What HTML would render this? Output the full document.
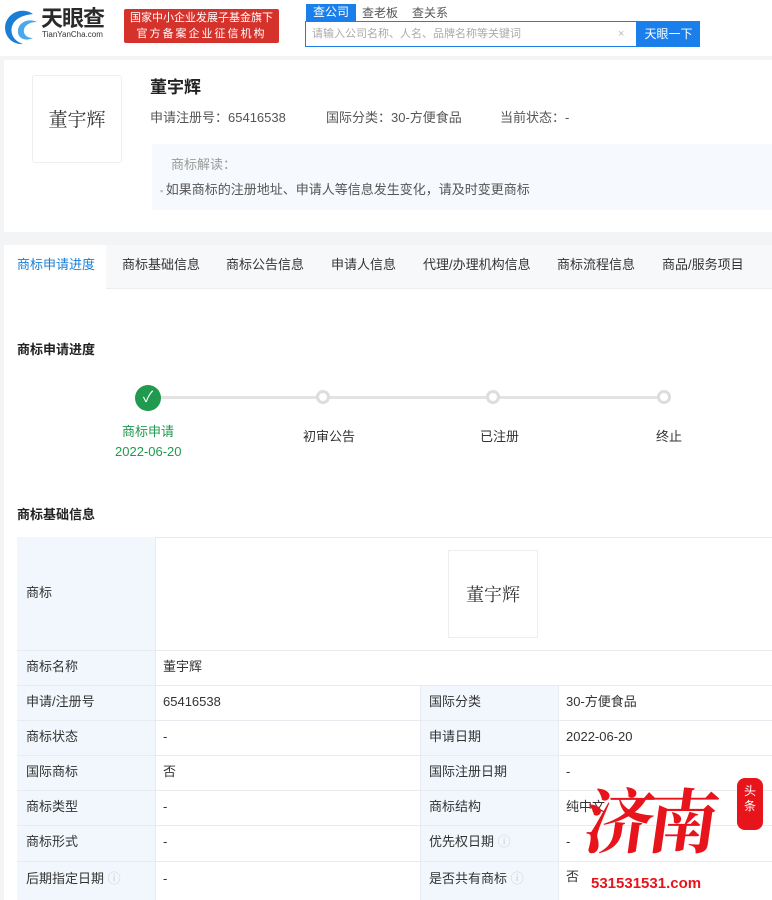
<!DOCTYPE html><html><head><meta charset="utf-8"><style>
*{margin:0;padding:0;box-sizing:border-box}
body{width:772px;height:900px;overflow:hidden;background:#f3f4f6;font-family:"Liberation Sans","Noto Sans CJK SC",sans-serif;color:#333;position:relative}
.a{position:absolute;white-space:nowrap;line-height:18px}
.f13{font-size:13px;line-height:18px}
</style></head><body>
<div class="a" style="left:0;top:0;width:772px;height:56px;background:#fff"></div>
<svg class="a" style="left:3px;top:8px" width="36" height="38" viewBox="0 0 36 38"><path d="M30 6C22 0 8 2 3 14 -1 26 8 37 20 36 10 33 6 24 10 16 14 9 22 7 30 6Z" fill="#1a7fd4"/><path d="M34 14C26 10 16 14 15 22 14 30 22 34 30 30 22 30 19 24 22 19 25 15 30 14 34 14Z" fill="#4aa8ec"/></svg>
<div class="a" style="left:41px;top:6px;font-size:22px;line-height:26px;font-weight:bold;color:#2a2a2a;letter-spacing:-1px">天眼查</div>
<div class="a" style="left:42px;top:30px;font-size:8px;line-height:10px;color:#333">TianYanCha.com</div>
<div class="a" style="left:124px;top:9px;width:155px;height:34px;background:#d6322c;border-radius:2px;color:#fff;font-size:11px;line-height:16px;padding:1px 4px;text-align:center">国家中小企业发展子基金旗下<br><span style="letter-spacing:2px">官方备案企业征信机构</span></div>
<div class="a" style="left:306px;top:4px;width:50px;height:17px;background:#1a7fea;color:#fff;font-size:12px;text-align:center;line-height:17px">查公司</div>
<div class="a" style="left:362px;top:4px;font-size:12px;color:#555">查老板</div>
<div class="a" style="left:412px;top:4px;font-size:12px;color:#555">查关系</div>
<div class="a" style="left:305px;top:21px;width:332px;height:26px;border:1px solid #1a7fea;background:#fff"></div>
<div class="a" style="left:312px;top:25px;font-size:11px;color:#aaa">请输入公司名称、人名、品牌名称等关键词</div>
<div class="a" style="left:618px;top:25px;font-size:11px;color:#bbb">×</div>
<div class="a" style="left:637px;top:21px;width:63px;height:26px;background:#1a7fea;color:#fff;font-size:12px;text-align:center;line-height:26px">天眼一下</div>

<div class="a" style="left:4px;top:60px;width:768px;height:172px;background:#fff"></div>
<div class="a" style="left:32px;top:75px;width:90px;height:88px;border:1px solid #eee;border-radius:3px;font-family:'Noto Serif CJK SC',serif;font-size:19px;text-align:center;line-height:86px">董宇辉</div>
<div class="a" style="left:150px;top:78px;font-size:17px;line-height:20px;font-weight:bold;color:#222">董宇辉</div>
<div class="a f13" style="left:150px;top:109px;color:#555">申请注册号：65416538</div>
<div class="a f13" style="left:326px;top:109px;color:#555">国际分类：30-方便食品</div>
<div class="a f13" style="left:500px;top:109px;color:#555">当前状态：-</div>
<div class="a" style="left:152px;top:144px;width:620px;height:66px;background:#f6f9fd"></div>
<div class="a f13" style="left:171px;top:156px;color:#999">商标解读：</div>
<div class="a f13" style="left:160px;top:181px;color:#555"><span style="color:#bbb;font-size:9px">▪ </span>如果商标的注册地址、申请人等信息发生变化，请及时变更商标</div>

<div class="a" style="left:4px;top:245px;width:768px;height:655px;background:#fff"></div>
<div class="a" style="left:4px;top:245px;width:768px;height:44px;background:#f7f8fa;border-bottom:1px solid #eee"></div>
<div class="a" style="left:4px;top:245px;width:102px;height:45px;background:#fff"></div>
<div class="a f13" style="left:17px;top:256px;color:#1a7fd4">商标申请进度</div>
<div class="a f13" style="left:122px;top:256px">商标基础信息</div>
<div class="a f13" style="left:226px;top:256px">商标公告信息</div>
<div class="a f13" style="left:331px;top:256px">申请人信息</div>
<div class="a f13" style="left:423px;top:256px">代理/办理机构信息</div>
<div class="a f13" style="left:557px;top:256px">商标流程信息</div>
<div class="a f13" style="left:662px;top:256px">商品/服务项目</div>

<div class="a f13" style="left:17px;top:341px;font-weight:bold;color:#222">商标申请进度</div>
<div class="a" style="left:148px;top:396px;width:516px;height:3px;background:#e3e3e3"></div>
<div class="a" style="left:135px;top:385px;width:26px;height:26px;border-radius:50%;background:#1f9a4f;color:#fff;font-size:15px;text-align:center;line-height:26px">✓</div>
<div class="a" style="left:316px;top:390px;width:14px;height:14px;border-radius:50%;background:#fff;border:3px solid #ddd"></div>
<div class="a" style="left:486px;top:390px;width:14px;height:14px;border-radius:50%;background:#fff;border:3px solid #ddd"></div>
<div class="a" style="left:657px;top:390px;width:14px;height:14px;border-radius:50%;background:#fff;border:3px solid #ddd"></div>
<div class="a f13" style="left:122px;top:423px;color:#1f9a4f">商标申请</div>
<div class="a f13" style="left:115px;top:443px;color:#1f9a4f">2022-06-20</div>
<div class="a f13" style="left:303px;top:428px">初审公告</div>
<div class="a f13" style="left:480px;top:428px">已注册</div>
<div class="a f13" style="left:656px;top:428px">终止</div>

<div class="a f13" style="left:17px;top:506px;font-weight:bold;color:#222">商标基础信息</div>
<div class="a" style="left:17px;top:537px;width:755px;height:363px;border-top:1px solid #e8ecf0;border-left:1px solid #e8ecf0"></div>
<div class="a" style="left:17px;top:537px;width:138px;height:363px;background:#f1f7fc"></div>
<div class="a" style="left:420px;top:685px;width:138px;height:215px;background:#f1f7fc"></div>
<div class="a" style="left:155px;top:537px;width:1px;height:363px;background:#e8ecf0"></div>
<div class="a" style="left:420px;top:685px;width:1px;height:215px;background:#e8ecf0"></div>
<div class="a" style="left:558px;top:685px;width:1px;height:215px;background:#e8ecf0"></div>
<div class="a" style="left:17px;top:650px;width:755px;height:1px;background:#e8ecf0"></div>
<div class="a" style="left:17px;top:685px;width:755px;height:1px;background:#e8ecf0"></div>
<div class="a" style="left:17px;top:720px;width:755px;height:1px;background:#e8ecf0"></div>
<div class="a" style="left:17px;top:755px;width:755px;height:1px;background:#e8ecf0"></div>
<div class="a" style="left:17px;top:790px;width:755px;height:1px;background:#e8ecf0"></div>
<div class="a" style="left:17px;top:825px;width:755px;height:1px;background:#e8ecf0"></div>
<div class="a" style="left:17px;top:861px;width:755px;height:1px;background:#e8ecf0"></div>
<div class="a" style="left:448px;top:550px;width:90px;height:88px;border:1px solid #eee;font-family:'Noto Serif CJK SC',serif;font-size:18px;text-align:center;line-height:86px">董宇辉</div>
<div class="a f13" style="left:26px;top:584px">商标</div>
<div class="a f13" style="left:26px;top:658px">商标名称</div><div class="a f13" style="left:163px;top:658px">董宇辉</div>
<div class="a f13" style="left:26px;top:693px">申请/注册号</div><div class="a f13" style="left:163px;top:693px">65416538</div>
<div class="a f13" style="left:429px;top:693px">国际分类</div><div class="a f13" style="left:566px;top:693px">30-方便食品</div>
<div class="a f13" style="left:26px;top:728px">商标状态</div><div class="a f13" style="left:163px;top:728px">-</div>
<div class="a f13" style="left:429px;top:728px">申请日期</div><div class="a f13" style="left:566px;top:728px">2022-06-20</div>
<div class="a f13" style="left:26px;top:763px">国际商标</div><div class="a f13" style="left:163px;top:763px">否</div>
<div class="a f13" style="left:429px;top:763px">国际注册日期</div><div class="a f13" style="left:566px;top:763px">-</div>
<div class="a f13" style="left:26px;top:798px">商标类型</div><div class="a f13" style="left:163px;top:798px">-</div>
<div class="a f13" style="left:429px;top:798px">商标结构</div><div class="a f13" style="left:566px;top:798px">纯中文</div>
<div class="a f13" style="left:26px;top:833px">商标形式</div><div class="a f13" style="left:163px;top:833px">-</div>
<div class="a f13" style="left:429px;top:833px">优先权日期 <span style="color:#ccc">ⓘ</span></div><div class="a f13" style="left:566px;top:833px">-</div>
<div class="a f13" style="left:26px;top:870px">后期指定日期 <span style="color:#ccc">ⓘ</span></div><div class="a f13" style="left:163px;top:870px">-</div>
<div class="a f13" style="left:429px;top:870px">是否共有商标 <span style="color:#ccc">ⓘ</span></div><div class="a f13" style="left:566px;top:868px">否</div>

<div class="a" style="left:585px;top:778px;font-size:70px;line-height:80px;font-weight:bold;color:#e8141b;font-family:'Noto Serif CJK SC',serif;letter-spacing:-6px;transform:skewX(-8deg)">济南</div>
<div class="a" style="left:737px;top:778px;width:26px;height:52px;background:#e8141b;border-radius:8px;color:#fff;font-size:12px;line-height:15px;text-align:center;padding-top:6px;white-space:normal">头<br>条</div>
<div class="a" style="left:591px;top:875px;font-size:15px;font-weight:bold;color:#e8141b">531531531.com</div>
</body></html>
